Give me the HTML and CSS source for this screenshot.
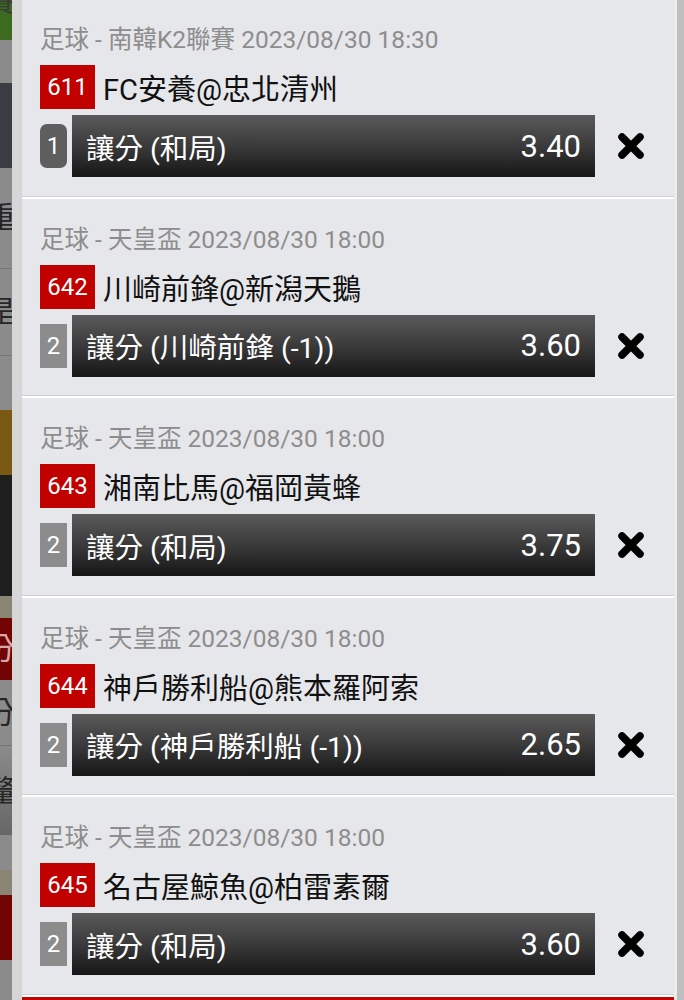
FILE: index.html
```html
<!DOCTYPE html>
<html lang="zh-Hant">

<head>
  <meta charset="UTF-8">
  <meta name="viewport" content="width=device-width, initial-scale=1">
  <title>投注單</title>
  <link rel="stylesheet" href="styles.css">
</head>

<body>
  <div id="page">
    <aside class="side">
      <div class="blk green"><span class="ch">賽</span></div>
      <div class="blk gray h43"></div>
      <div class="blk slate"></div>
      <div class="blk gray h100"><span class="ch">重</span></div>
      <div class="blk gray h87 line"><span class="ch">昰</span></div>
      <div class="blk gray h55 line"></div>
      <div class="blk brown"></div>
      <div class="blk black"></div>
      <div class="blk tan h22"></div>
      <div class="blk red h62"><span class="ch light">分</span></div>
      <div class="blk gray h65"><span class="ch">分</span></div>
      <div class="blk fade h90 line"><span class="ch">釐</span></div>
      <div class="blk gray h35"></div>
      <div class="blk tan h25"></div>
      <div class="blk red h65"></div>
      <div class="blk gray h40"></div>
    </aside>

    <div class="edge"></div>

    <main id="slip">
      <div class="card">
        <div class="league">足球 - 南韓K2聯賽 2023/08/30 18:30</div>
        <div class="match"><span class="num">611</span>FC安養@忠北清州</div>
        <div class="bet">
          <span class="seq dark">1</span>
          <div class="bar"><span>讓分 (和局)</span><span class="odds">3.40</span></div>
          <button class="del" aria-label="移除">
            <svg width="28" height="28" viewBox="0 0 28 28"><path d="M5 5 L23 23 M23 5 L5 23" stroke="#000" stroke-width="7.5" stroke-linecap="round"/></svg>
          </button>
        </div>
      </div>

      <div class="card">
        <div class="league">足球 - 天皇盃 2023/08/30 18:00</div>
        <div class="match"><span class="num">642</span>川崎前鋒@新潟天鵝</div>
        <div class="bet">
          <span class="seq">2</span>
          <div class="bar"><span>讓分 (川崎前鋒 (-1))</span><span class="odds">3.60</span></div>
          <button class="del" aria-label="移除">
            <svg width="28" height="28" viewBox="0 0 28 28"><path d="M5 5 L23 23 M23 5 L5 23" stroke="#000" stroke-width="7.5" stroke-linecap="round"/></svg>
          </button>
        </div>
      </div>

      <div class="card">
        <div class="league">足球 - 天皇盃 2023/08/30 18:00</div>
        <div class="match"><span class="num">643</span>湘南比馬@福岡黃蜂</div>
        <div class="bet">
          <span class="seq">2</span>
          <div class="bar"><span>讓分 (和局)</span><span class="odds">3.75</span></div>
          <button class="del" aria-label="移除">
            <svg width="28" height="28" viewBox="0 0 28 28"><path d="M5 5 L23 23 M23 5 L5 23" stroke="#000" stroke-width="7.5" stroke-linecap="round"/></svg>
          </button>
        </div>
      </div>

      <div class="card">
        <div class="league">足球 - 天皇盃 2023/08/30 18:00</div>
        <div class="match"><span class="num">644</span>神戶勝利船@熊本羅阿索</div>
        <div class="bet">
          <span class="seq">2</span>
          <div class="bar"><span>讓分 (神戶勝利船 (-1))</span><span class="odds">2.65</span></div>
          <button class="del" aria-label="移除">
            <svg width="28" height="28" viewBox="0 0 28 28"><path d="M5 5 L23 23 M23 5 L5 23" stroke="#000" stroke-width="7.5" stroke-linecap="round"/></svg>
          </button>
        </div>
      </div>

      <div class="card">
        <div class="league">足球 - 天皇盃 2023/08/30 18:00</div>
        <div class="match"><span class="num">645</span>名古屋鯨魚@柏雷素爾</div>
        <div class="bet">
          <span class="seq">2</span>
          <div class="bar"><span>讓分 (和局)</span><span class="odds">3.60</span></div>
          <button class="del" aria-label="移除">
            <svg width="28" height="28" viewBox="0 0 28 28"><path d="M5 5 L23 23 M23 5 L5 23" stroke="#000" stroke-width="7.5" stroke-linecap="round"/></svg>
          </button>
        </div>
      </div>

      <div class="card next"></div>
    </main>

    <div class="rail"></div>
  </div>
</body>

</html>
```

FILE: styles.css
```css
* {
  box-sizing: border-box;
}

body {
  margin: 0;
  font-family: Roboto, "Noto Sans CJK TC", sans-serif;
  background-color: #bfbfbf;
  overflow: hidden;
}

#page {
  display: flex;
  height: 1000px;
  overflow: hidden;
}

/* page underneath the slip */
.side {
  width: 12px;
  flex-shrink: 0;
  display: flex;
  flex-direction: column;
  overflow: hidden;
}

.blk {
  flex-shrink: 0;
  display: flex;
  align-items: center;
  justify-content: flex-end;
  overflow: hidden;
}

.blk.line {
  border-top: 1px solid #767676;
}

.ch {
  flex-shrink: 0;
  font-size: 30px;
  line-height: 1;
  color: #262626;
  margin-right: -4px;
}

.ch.light {
  color: #d8a8a8;
}

.green {
  height: 40px;
  background-color: #3c6a1e;
  align-items: flex-start;
}

.green .ch {
  margin-top: -14px;
  color: #3a3a3a;
}

.slate {
  height: 85px;
  background-color: #3a3c44;
}

.brown {
  height: 65px;
  background-color: #7a5912;
}

.black {
  height: 121px;
  background-color: #1e1e1e;
}

.gray { background-color: #8b8b8b; }
.tan { background-color: #8a8474; }
.red { background-color: #730404; }
.fade { background: linear-gradient(#8b8b8b, #666); }

.h22 { height: 22px; }
.h25 { height: 25px; }
.h35 { height: 35px; }
.h40 { height: 40px; }
.h43 { height: 43px; }
.h55 { height: 55px; }
.h62 { height: 62px; }
.h65 { height: 65px; }
.h87 { height: 87px; }
.h90 { height: 90px; }
.h100 { height: 100px; }

.edge {
  width: 10px;
  flex-shrink: 0;
  background-color: #d6d6d6;
}

/* bet slip */
#slip {
  width: 652px;
  flex-shrink: 0;
  margin-top: -1px;
}

.rail {
  width: 3px;
  flex-shrink: 0;
  background-color: #ececec;
}

.card {
  background-color: #e6e7eb;
  padding: 26px 0 18.5px 18px;
  border-bottom: 1px solid #cfd0d3;
  margin-bottom: 2px;
  box-shadow: 0 2px 0 #fff;
}

.card.next {
  height: 40px;
  border-top: 3px solid #c40000;
  box-shadow: none;
  background-color: #eee;
}

.league {
  height: 30px;
  line-height: 30px;
  font-size: 24.5px;
  color: #8d8d8d;
  white-space: nowrap;
}

.match {
  display: flex;
  align-items: center;
  margin-top: 10px;
  height: 44px;
  font-size: 29px;
  color: #111;
  white-space: nowrap;
}

.num {
  width: 55px;
  height: 44px;
  margin-right: 8px;
  background-color: #c10000;
  color: #fff;
  font-size: 24px;
  display: flex;
  align-items: center;
  justify-content: center;
}

.bet {
  display: flex;
  align-items: center;
  margin-top: 6px;
  height: 62px;
}

.seq {
  width: 27px;
  height: 44px;
  background-color: #8c8c8c;
  color: #fff;
  font-size: 24px;
  display: flex;
  align-items: center;
  justify-content: center;
}

.seq.dark {
  background-color: #5e5e5e;
  border-radius: 7px;
}

.bar {
  width: 523px;
  height: 62px;
  margin-left: 5px;
  padding: 0 14px;
  display: flex;
  align-items: center;
  background: linear-gradient(#5a5a5a, #3a3a3a 50%, #161616);
  color: #fff;
  font-size: 28.5px;
  white-space: nowrap;
}

.odds {
  margin-left: auto;
  font-size: 31px;
}

.del {
  margin-left: 22px;
  padding: 0;
  border: none;
  background: none;
  width: 28px;
  height: 28px;
  cursor: pointer;
}

.del svg {
  display: block;
}
```
